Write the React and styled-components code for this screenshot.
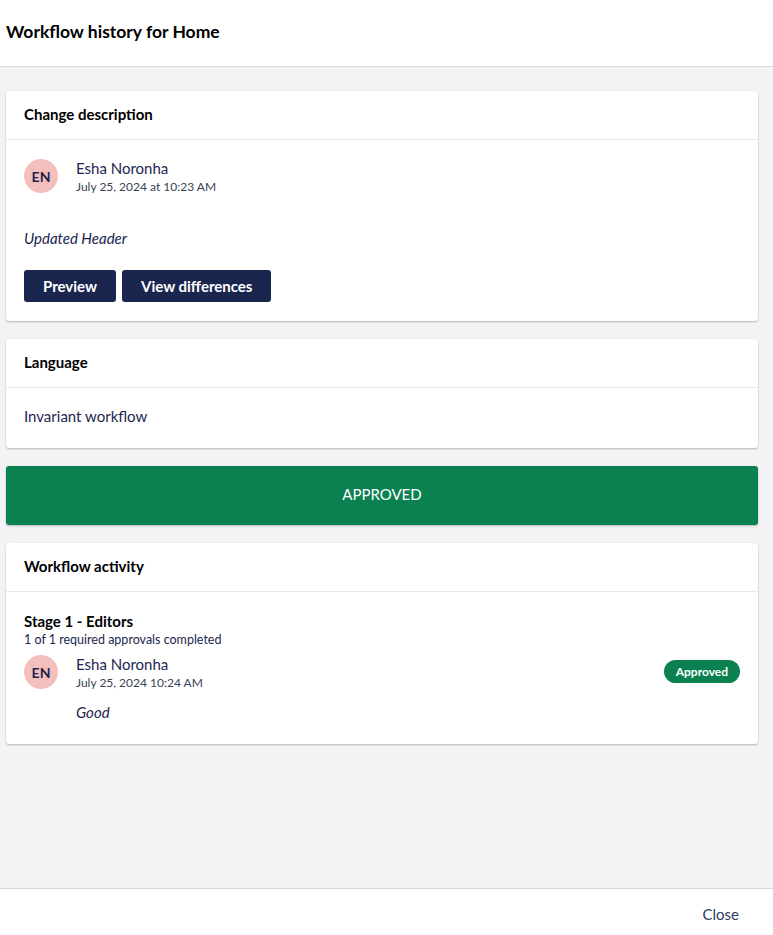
import React from 'react'
import styled, { createGlobalStyle } from 'styled-components'

const GlobalStyle = createGlobalStyle`
  html, body {
    margin: 0;
    padding: 0;
    height: 100%;
  }
  body {
    font-family: Lato, "Open Sans", sans-serif;
    color: #1b264f;
    background: #f3f3f5;
  }
  #root {
    height: 100%;
  }
`

const Page = styled.div`
  height: 935px;
  display: flex;
  flex-direction: column;
  background: #f3f3f5;
`

const Header = styled.div`
  height: 67px;
  box-sizing: border-box;
  background: #fff;
  border-bottom: 1px solid #d8d7d9;
  display: flex;
  align-items: center;
  padding: 0 6px 4px;
  h1 {
    margin: 0;
    font-size: 17.5px;
    font-weight: 700;
    color: #000;
  }
`

const Body = styled.div`
  flex: 1;
  padding: 24px 15px 0 6px;
  display: flex;
  flex-direction: column;
  gap: 18px;
`

const Card = styled.div`
  background: #fff;
  border-radius: 3px;
  box-shadow: 0 1px 2px rgba(0, 0, 0, 0.25);
`

const CardHeader = styled.div`
  height: 45px;
  padding: 0 18px 3px;
  border-bottom: 1px solid #e9e9eb;
  display: flex;
  align-items: center;
  font-size: 15px;
  font-weight: 700;
  color: #000;
`

const CardBody = styled.div`
  padding: ${p => p.$pad || '18px 18px 19px'};
`

const User = styled.div`
  display: flex;
  align-items: flex-start;
  gap: 18px;
  margin-top: ${p => p.$top || '0'};
`

const Avatar = styled.div`
  width: 34px;
  height: 34px;
  border-radius: 50%;
  background: #f4bebd;
  color: #1b264f;
  font-size: 14px;
  font-weight: 700;
  display: flex;
  align-items: center;
  justify-content: center;
  flex-shrink: 0;
  margin-top: 1px;
`

const UserInfo = styled.div`
  flex: 1;
  display: flex;
  flex-direction: column;
`

const Name = styled.div`
  font-size: 15px;
  line-height: 20px;
  color: #1b264f;
`

const Date = styled.div`
  font-size: 12px;
  line-height: 18px;
  color: #3b4256;
`

const Comment = styled.div`
  font-style: italic;
  font-size: 15px;
  line-height: 20px;
  color: #1b264f;
  margin-top: ${p => p.$top || '0'};
`

const Buttons = styled.div`
  display: flex;
  gap: 6px;
  margin-top: 22px;
`

const Button = styled.button`
  height: 32px;
  padding: 0 19px;
  border: none;
  border-radius: 3px;
  background: #1b264f;
  color: #fff;
  font-family: Lato, sans-serif;
  font-size: 15px;
  font-weight: 700;
`

const Plain = styled.div`
  font-size: 15px;
  line-height: 20px;
  color: #1b264f;
`

const Banner = styled.div`
  height: 56px;
  padding-bottom: 3px;
  background: #0b8152;
  border-radius: 3px;
  box-shadow: 0 1px 2px rgba(0, 0, 0, 0.25);
  color: #fff;
  font-size: 15px;
  display: flex;
  align-items: center;
  justify-content: center;
`

const StageTitle = styled.div`
  font-size: 15px;
  font-weight: 700;
  color: #000;
  line-height: 20px;
`

const StageSub = styled.div`
  font-size: 12.5px;
  line-height: 14px;
  margin-top: 2px;
  color: #1b264f;
`

const Badge = styled.span`
  align-self: flex-start;
  margin-top: 6px;
  height: 23px;
  padding: 0 12px;
  border-radius: 12px;
  background: #0b8152;
  color: #fff;
  font-size: 12px;
  font-weight: 700;
  display: flex;
  align-items: center;
`

const Footer = styled.div`
  height: 47px;
  box-sizing: border-box;
  background: #fff;
  border-top: 1px solid #d8d7d9;
  display: flex;
  align-items: center;
  justify-content: flex-end;
  padding: 4px 34px 0 0;
  font-size: 15px;
  color: #2f3a62;
`

const App = () => {
  return (
    <Page>
      <GlobalStyle />
      <Header>
        <h1>Workflow history for Home</h1>
      </Header>
      <Body>
        <Card>
          <CardHeader>Change description</CardHeader>
          <CardBody $pad="18px 18px 19px">
            <User>
              <Avatar>EN</Avatar>
              <UserInfo>
                <Name>Esha Noronha</Name>
                <Date>July 25, 2024 at 10:23 AM</Date>
              </UserInfo>
            </User>
            <Comment $top="32px">Updated Header</Comment>
            <Buttons>
              <Button>Preview</Button>
              <Button>View differences</Button>
            </Buttons>
          </CardBody>
        </Card>
        <Card>
          <CardHeader>Language</CardHeader>
          <CardBody $pad="18px 18px 22px">
            <Plain>Invariant workflow</Plain>
          </CardBody>
        </Card>
        <Banner>APPROVED</Banner>
        <Card>
          <CardHeader>Workflow activity</CardHeader>
          <CardBody $pad="19px 18px 22px">
            <StageTitle>Stage 1 - Editors</StageTitle>
            <StageSub>1 of 1 required approvals completed</StageSub>
            <User $top="7px">
              <Avatar>EN</Avatar>
              <UserInfo>
                <Name>Esha Noronha</Name>
                <Date>July 25, 2024 10:24 AM</Date>
                <Comment $top="10px">Good</Comment>
              </UserInfo>
              <Badge>Approved</Badge>
            </User>
          </CardBody>
        </Card>
      </Body>
      <Footer>Close</Footer>
    </Page>
  )
}

export default App
